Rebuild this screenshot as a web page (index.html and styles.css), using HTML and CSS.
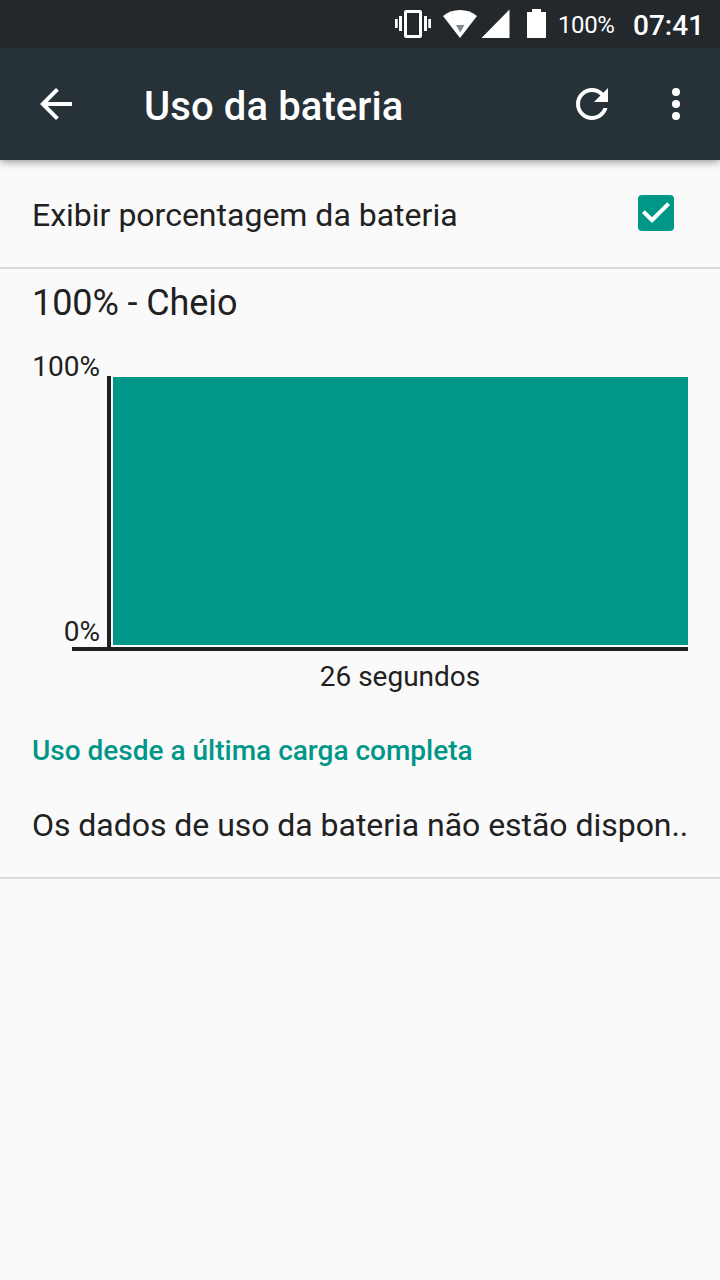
FILE: index.html
```html
<!DOCTYPE html>
<html lang="pt-BR">
<head>
    <meta charset="UTF-8">
    <meta name="viewport" content="width=device-width, initial-scale=1.0">
    <title>Uso da bateria</title>
    <link rel="stylesheet" href="styles.css">
</head>
<body>

<div class="status-bar">
    <svg class="icon-vibrate" width="36" height="30" viewBox="0 0 36 30" fill="#fff">
        <path d="M0 11h2.700v9H0zM4 8h3v15H4zM29 8h3v15h-3zM33.300 11H36v9h-2.700z"/>
        <path fill-rule="evenodd" d="M11 2h14a2 2 0 0 1 2 2v24a2 2 0 0 1-2 2H11a2 2 0 0 1-2-2V4a2 2 0 0 1 2-2zm1 3v22h12V5z"/>
    </svg>
    <svg class="icon-wifi" width="34" height="30" viewBox="0 0 34 30">
        <path fill="#fff" d="M17 30L0 8Q7 2 17 2T34 8z"/>
        <path fill="#85888a" d="M13 17h8.500l-4.250 7.500z"/>
    </svg>
    <svg class="icon-signal" width="29" height="30" viewBox="0 0 29 30" fill="#fff">
        <path d="M28.500 1.500V30.500H0z"/>
    </svg>
    <svg class="icon-battery" width="19" height="30" viewBox="0 0 19 30" fill="#fff">
        <path d="M5 1h9v3h5v26H0V4h5z"/>
    </svg>
    <span class="level">100%</span>
    <span class="clock">07:41</span>
</div>

<header class="toolbar">
    <svg class="icon" viewBox="0 0 24 24"><path d="M20 11H7.830l5.590-5.590L12 4l-8 8 8 8 1.410-1.410L7.830 13H20z"/></svg>
    <h1>Uso da bateria</h1>
    <svg class="icon" viewBox="0 0 24 24"><path d="M17.650 6.350C16.200 4.900 14.210 4 12 4c-4.420 0-7.990 3.580-7.990 8s3.570 8 7.990 8c3.730 0 6.840-2.550 7.730-6h-2.080c-.82 2.330-3.040 4-5.650 4-3.310 0-6-2.690-6-6s2.690-6 6-6c1.660 0 3.140.69 4.220 1.780L13 11h7V4z"/></svg>
    <svg class="icon icon-more" viewBox="0 0 24 24"><circle cx="12" cy="6" r="2"/><circle cx="12" cy="12" r="2"/><circle cx="12" cy="18" r="2"/></svg>
</header>

<div class="row">
    <span>Exibir porcentagem da bateria</span>
    <svg class="checkbox" viewBox="0 0 24 24">
        <rect x="3" y="3" width="18" height="18" rx="2" fill="#009688"/>
        <path fill="#fff" d="M10 17l-5-5 1.410-1.410L10 14.170l7.590-7.590L19 8z"/>
    </svg>
</div>

<section class="battery">
    <h2>100% - Cheio</h2>
    <div class="chart">
        <div class="labels">
            <span>100%</span>
            <span>0%</span>
        </div>
        <div class="plot">
            <div class="fill"></div>
        </div>
    </div>
    <div class="x-axis"></div>
    <p class="duration">26 segundos</p>
</section>

<h3 class="category">Uso desde a última carga completa</h3>
<div class="row message">
    <span>Os dados de uso da bateria não estão dispon..</span>
</div>

</body>
</html>
```
FILE: styles.css
```css
body {
    font-family: Roboto, sans-serif;
    background-color: #fafafa;
    margin: 0;
    color: #212121;
}
h1, h2, h3, p {
    margin: 0;
    font-weight: 400;
}
svg {
    display: block;
    flex: none;
}

/* status bar */
.status-bar {
    position: relative;
    z-index: 1; /* above the toolbar shadow */
    display: flex;
    justify-content: flex-end;
    height: 48px;
    padding-right: 17px;
    box-sizing: border-box;
    background-color: #22282c;
    color: #fff;
    line-height: 50px;
    white-space: nowrap;
}
.status-bar svg {
    margin-top: 8px;
}
.icon-wifi {
    margin-left: 12px;
}
.status-bar .icon-signal {
    margin-left: 4px;
    margin-right: 1px;
}
.icon-battery {
    margin-left: 16px;
}
.level {
    width: 75px;
    margin-left: 12px;
    font-size: 24px;
    letter-spacing: -0.4px;
}
.clock {
    width: 70px;
    font-size: 28px;
    font-weight: 500;
    line-height: 52px;
}

/* toolbar */
.toolbar {
    display: flex;
    align-items: center;
    height: 112px;
    padding: 0 20px 0 32px;
    box-sizing: border-box;
    background-color: #263238;
    color: #fff;
    box-shadow: 0 2px 8px rgba(0, 0, 0, 0.4);
}
.toolbar h1 {
    flex: 1;
    margin-left: 64px;
    padding-top: 4px;
    font-size: 40px;
    font-weight: 500;
    letter-spacing: 0.1px;
}
.icon {
    width: 48px;
    height: 48px;
    fill: #fff;
}
.icon-more {
    margin-left: 36px;
}

/* list rows */
.row {
    display: flex;
    justify-content: space-between;
    height: 109px;
    padding: 0 40px 0 32px;
    box-sizing: border-box;
    border-bottom: 2px solid #dadada;
    font-size: 32px;
    line-height: 110px;
    white-space: nowrap;
}
.checkbox {
    width: 48px;
    height: 48px;
    margin-top: 29px;
}

/* battery chart */
.battery {
    padding: 13px 32px 0;
}
.battery h2 {
    font-size: 36px;
    line-height: 42px;
    letter-spacing: -0.1px;
}
.chart {
    display: flex;
    height: 295px;
    margin-top: 28px;
    font-size: 28px;
    line-height: 28px;
}
.labels {
    display: flex;
    flex-direction: column;
    justify-content: space-between;
    width: 75px;
    padding: 1px 7px 1px 0;
    box-sizing: border-box;
    text-align: right;
}
.plot {
    flex: 1;
    margin-top: 24px;
    padding: 1px 0 2px 2px;
    border-left: 4px solid #212121;
}
.fill {
    height: 100%;
    background-color: #009688;
}
.x-axis {
    height: 4px;
    margin-left: 40px;
    background-color: #212121;
}
.duration {
    margin-top: 10px;
    padding-left: 80px;
    font-size: 28px;
    line-height: 32px;
    text-align: center;
}

.category {
    margin-top: 42px;
    padding: 0 32px;
    color: #009688;
    font-size: 28px;
    font-weight: 500;
    line-height: 32px;
}
.message {
    height: 112px;
    padding-right: 32px;
    line-height: 116px;
    letter-spacing: -0.04px;
}
```
